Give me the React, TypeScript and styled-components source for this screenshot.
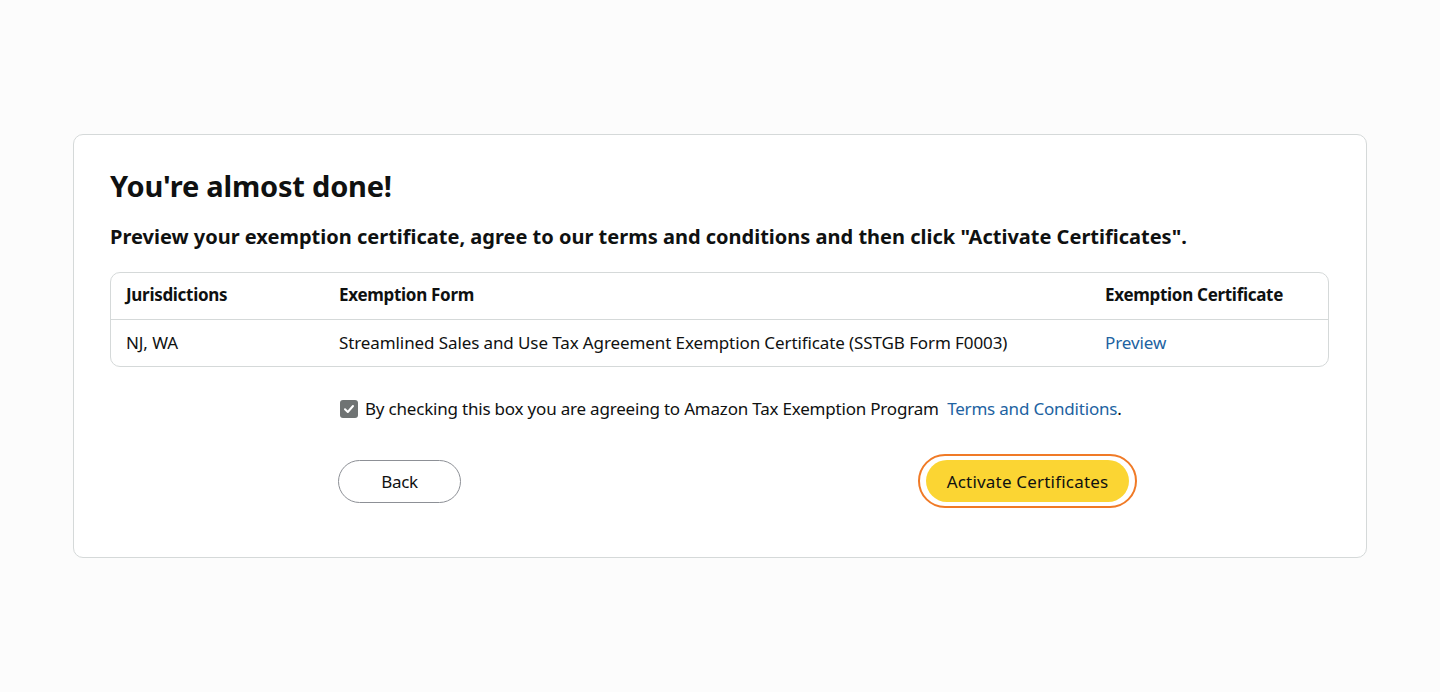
import React from "react"
import styled, { createGlobalStyle } from "styled-components"

const GlobalStyle = createGlobalStyle`
  html, body {
    margin: 0;
    padding: 0;
    background: #fcfcfc;
    font-family: "Noto Sans", "Open Sans", Arial, sans-serif;
    color: #0f1111;
  }
`

const Page = styled.div`
  width: 1440px;
  height: 692px;
  padding-top: 134px;
  box-sizing: border-box;
`

const Card = styled.section`
  margin: 0 73px;
  border: 1px solid #d5d9d9;
  border-radius: 10px;
  background: #ffffff;
  padding: 32px 37px 54px 36px;
  box-sizing: border-box;
  height: 424px;
`

const Title = styled.h1`
  margin: 0;
  font-size: 29px;
  line-height: 38px;
  font-weight: 700;
  letter-spacing: -0.2px;
`

const Subtitle = styled.h2`
  margin: 18px 0 0;
  font-size: 20px;
  line-height: 28px;
  font-weight: 700;
  letter-spacing: 0;
`

const Table = styled.div`
  margin-top: 21px;
  border: 1px solid #d5d9d9;
  border-radius: 10px;
  overflow: hidden;
`

const Row = styled.div<{ $header?: boolean }>`
  display: grid;
  grid-template-columns: 213px 766px 1fr;
  height: ${p => (p.$header ? "46px" : "47px")};
  box-sizing: border-box;
  align-items: center;
  padding: 0 0 ${p => (p.$header ? "4px" : "2px")} 15px;
  font-size: 17px;
  font-weight: ${p => (p.$header ? 700 : 400)};
  letter-spacing: ${p => (p.$header ? "-0.3px" : "-0.1px")};
  border-top: ${p => (p.$header ? "none" : "1px solid #d5d9d9")};
`

const Link = styled.a`
  color: #2162a1;
  text-decoration: none;
  cursor: pointer;
`

const Actions = styled.div`
  margin: 30px 0 0 228px;
  width: 798px;
`

const Agree = styled.label`
  display: flex;
  align-items: center;
  gap: 7px;
  margin-left: 2px;
  font-size: 17px;
  letter-spacing: -0.2px;
`

const Check = styled.span`
  width: 18px;
  height: 18px;
  border-radius: 3px;
  background: #6f7373;
  display: flex;
  align-items: center;
  justify-content: center;
`

const Buttons = styled.div`
  margin-top: 34px;
  display: flex;
  justify-content: space-between;
  align-items: center;
`

const BackButton = styled.button`
  width: 123px;
  height: 43px;
  border: 1px solid #8d9096;
  border-radius: 22px;
  background: #ffffff;
  font-family: inherit;
  font-size: 17px;
  color: #0f1111;
  letter-spacing: -0.3px;
`

const PrimaryRing = styled.span`
  display: inline-flex;
  padding: 4px 6px;
  border: 2px solid #f07a26;
  border-radius: 30px;
  margin-right: -1px;
`

const PrimaryButton = styled.button`
  width: 203px;
  height: 42px;
  border: none;
  border-radius: 21px;
  background: #fbd533;
  font-family: inherit;
  font-size: 17px;
  color: #0f1111;
  letter-spacing: 0.2px;
`

export default function App() {
  return (
    <Page>
      <GlobalStyle />
      <Card>
        <Title>You're almost done!</Title>
        <Subtitle>
          Preview your exemption certificate, agree to our terms and conditions and then click
          "Activate Certificates".
        </Subtitle>
        <Table>
          <Row $header>
            <span>Jurisdictions</span>
            <span>Exemption Form</span>
            <span>Exemption Certificate</span>
          </Row>
          <Row>
            <span>NJ, WA</span>
            <span>Streamlined Sales and Use Tax Agreement Exemption Certificate (SSTGB Form F0003)</span>
            <Link>Preview</Link>
          </Row>
        </Table>
        <Actions>
          <Agree>
            <Check>
              <svg width="12" height="12" viewBox="0 0 12 12">
                <path d="M2 6.3 L4.8 9 L10 3" fill="none" stroke="#fff" strokeWidth="2" strokeLinecap="round" strokeLinejoin="round" />
              </svg>
            </Check>
            <span>
              By checking this box you are agreeing to Amazon Tax Exemption Program&nbsp;{" "}
              <Link>Terms and Conditions</Link>.
            </span>
          </Agree>
          <Buttons>
            <BackButton>Back</BackButton>
            <PrimaryRing>
              <PrimaryButton>Activate Certificates</PrimaryButton>
            </PrimaryRing>
          </Buttons>
        </Actions>
      </Card>
    </Page>
  )
}
